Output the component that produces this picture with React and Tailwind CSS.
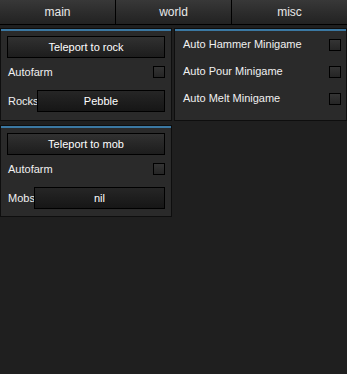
import React from 'react';

const font = { fontFamily: '"Liberation Sans", Arial, sans-serif' };

const Tab = ({ label, last }) => (
  <div
    className={`flex-1 flex items-center justify-center h-full bg-gradient-to-b from-[#383838] to-[#222222] text-[#e8e8e8] text-[12px] ${
      last ? '' : 'border-r border-black'
    }`}
  >
    {label}
  </div>
);

const Panel = ({ children, className = '' }) => (
  <div className={`border border-[#0e0e0e] bg-[#2a2a2a] ${className}`}>
    <div className="h-[2px] bg-[#3b78a2]" />
    {children}
  </div>
);

const Button = ({ label }) => (
  <div className="h-[22px] flex items-center justify-center border border-black bg-gradient-to-b from-[#313131] to-[#1d1d1d] text-white text-[11px]">
    {label}
  </div>
);

const Checkbox = () => (
  <div className="w-[12px] h-[12px] border border-black bg-gradient-to-b from-[#343434] to-[#252525]" />
);

const ToggleRow = ({ label, h = 'h-[28px]', pl = 'pl-[1px]' }) => (
  <div className={`flex items-center justify-between ${h}`}>
    <span className={`text-[11px] text-[#f0f0f0] ${pl}`}>{label}</span>
    <Checkbox />
  </div>
);

const Dropdown = ({ label, value, labelWidth }) => (
  <div className="flex items-center h-[22px] mt-[4px]">
    <div className={`${labelWidth} shrink-0 whitespace-nowrap text-[11px] text-[#f0f0f0] pl-[1px]`}>
      {label}
    </div>
    <div className="relative flex-1 h-full flex items-center justify-center border border-black bg-gradient-to-b from-[#262626] to-[#161616] text-white text-[11px]">
      {value}
    </div>
  </div>
);

export default function App() {
  return (
    <div className="w-[347px] h-[374px] bg-[#1f1f1f] overflow-hidden" style={font}>
      {/* tab bar */}
      <div className="flex h-[25px] border-b border-black">
        <Tab label="main" />
        <Tab label="world" />
        <Tab label="misc" last />
      </div>

      <div className="flex gap-[2px] pt-[3px]">
        {/* left column */}
        <div className="w-[172px] flex flex-col gap-[4px]">
          <Panel>
            <div className="px-[6px] pt-[5px] pb-[8px]">
              <Button label="Teleport to rock" />
              <ToggleRow label="Autofarm" />
              <Dropdown label="Rocks" value="Pebble" labelWidth="w-[30px]" />
            </div>
          </Panel>
          <Panel>
            <div className="px-[6px] pt-[5px] pb-[7px]">
              <Button label="Teleport to mob" />
              <ToggleRow label="Autofarm" />
              <Dropdown label="Mobs" value="nil" labelWidth="w-[27px]" />
            </div>
          </Panel>
        </div>

        {/* right column */}
        <div className="flex-1 self-start">
          <Panel>
            <div className="pl-[8px] pr-[5px] pb-[8px]">
              <ToggleRow label="Auto Hammer Minigame" h="h-[27px]" pl="" />
              <ToggleRow label="Auto Pour Minigame" h="h-[27px]" pl="" />
              <ToggleRow label="Auto Melt Minigame" h="h-[27px]" pl="" />
            </div>
          </Panel>
        </div>
      </div>
    </div>
  );
}
